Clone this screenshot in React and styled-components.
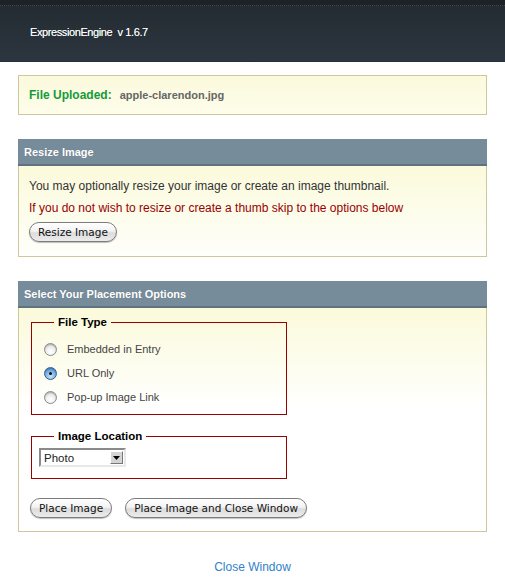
import React, { useState } from 'react'
import styled, { createGlobalStyle } from 'styled-components'

const GlobalStyle = createGlobalStyle`
  html, body {
    margin: 0;
    padding: 0;
    background: #fff;
  }
  body {
    font-family: "Liberation Sans", Arial, sans-serif;
    font-size: 12px;
    color: #333;
  }
`

const Header = styled.div`
  height: 62px;
  box-sizing: border-box;
  background: linear-gradient(#1d2227 0, #1d2227 5px, #242b32 6px, #2c363f 100%);
  border-bottom: 1px solid #2a2e45;
  position: relative;
  display: flex;
  align-items: center;
  padding: 0 30px;

  &::before {
    content: '';
    position: absolute;
    left: 0;
    right: 0;
    top: 5px;
    border-top: 1px dotted #3d454d;
  }
`

const Title = styled.div`
  color: #fff;
  font-size: 11px;
  letter-spacing: -0.4px;
  padding-top: 2px;
  white-space: pre;
  text-shadow: 0 0 0.5px rgba(255, 255, 255, 0.6);
`

const Content = styled.div`
  padding: 13px 18px 0;
  display: flex;
  flex-direction: column;
  gap: 24px;
`

const Notice = styled.div`
  height: 40px;
  box-sizing: border-box;
  border: 1px solid #cdc89c;
  background: linear-gradient(#fbfadd, #fdfdea);
  display: flex;
  align-items: center;
  padding: 0 10px;
  font-weight: bold;
  font-size: 12px;
`

const Green = styled.span`
  color: #139a3c;
  margin-right: 8px;
`

const FileName = styled.span`
  color: #666;
  font-size: 11px;
`

const Section = styled.div`
  display: flex;
  flex-direction: column;
`

const SectionHead = styled.div`
  height: 25px;
  background: #778c9a;
  border-bottom: 2px solid #5f7280;
  color: #fff;
  font-weight: bold;
  font-size: 11px;
  display: flex;
  align-items: center;
  padding: 0 6px;
  text-shadow: 0 0 1px rgba(0, 0, 0, 0.2);
`

const SectionBody = styled.div`
  border: 1px solid #cdc89c;
  border-top: none;
  background: linear-gradient(#fbfadb 0, #fdfdf0 60px, #fff 100px);
  padding: ${(p) => p.pad};
  display: flex;
  flex-direction: column;
  align-items: flex-start;
`

const Line = styled.p`
  margin: 0;
  line-height: 22px;
  color: ${(p) => (p.red ? '#990000' : '#333')};
`

const Button = styled.button`
  font-family: "DejaVu Sans", "Lucida Grande", sans-serif;
  font-size: 10.5px;
  color: #111;
  height: 20px;
  padding: 0 8px;
  border-radius: 10px;
  border: 1px solid #7c7c7c;
  background: linear-gradient(#ffffff 0%, #f3f3f3 45%, #dcdcdc 55%, #ececec 100%);
  box-shadow: 0 1px 1px rgba(0, 0, 0, 0.25);
  cursor: pointer;
  line-height: 18px;
`

const Fieldset = styled.fieldset`
  width: 256px;
  box-sizing: border-box;
  margin: 0;
  border: 1px solid #990000;
  padding: ${(p) => p.pad};
`

const Legend = styled.legend`
  font-weight: bold;
  font-size: 11.5px;
  color: #000;
  padding: 0 4px;
  margin-left: ${(p) => p.offset}px;
`

const RadioRow = styled.label`
  display: flex;
  align-items: center;
  height: 24px;
  color: #444;
  font-size: 11px;
  cursor: pointer;
`

const Radio = styled.input`
  appearance: none;
  width: 13px;
  height: 13px;
  margin: 0 10px 0 2px;
  border-radius: 50%;
  border: 1px solid #8a8a8a;
  background: radial-gradient(circle at 50% 70%, #ffffff 0, #f2f2f2 40%, #c9c9c9 100%);
  box-shadow: inset 0 1px 1px rgba(0, 0, 0, 0.2);
  position: relative;

  &:checked {
    border-color: #3a5f8c;
    background: radial-gradient(circle at 50% 75%, #c5e6fb 0, #7fb8e8 45%, #3a78c0 100%);
  }
  &:checked::after {
    content: '';
    position: absolute;
    left: 4px;
    top: 4px;
    width: 3px;
    height: 3px;
    border-radius: 50%;
    background: #111;
  }
`

const SelectBox = styled.div`
  width: 87px;
  height: 19px;
  box-sizing: border-box;
  border: 2px solid;
  border-color: #8a8a8a #e8e8e8 #e8e8e8 #8a8a8a;
  background: #fff;
  display: flex;
  align-items: center;
  font-size: 11.5px;
  color: #222;
  padding-left: 3px;
`

const SelectText = styled.span`
  flex: 1;
`

const Arrow = styled.span`
  width: 13px;
  height: 13px;
  margin-right: 1px;
  box-sizing: border-box;
  border: 1px solid;
  border-color: #fff #777 #777 #fff;
  background: #d4d4d4;
  display: flex;
  align-items: center;
  justify-content: center;
`

const Buttons = styled.div`
  display: flex;
  gap: 13px;
  margin: 19px 0 0 -1px;
`

const Footer = styled.div`
  text-align: center;
  padding: 28px 0 0;
`

const Link = styled.a`
  color: #3182c9;
  text-decoration: none;
  font-size: 12px;
`

const options = ['Embedded in Entry', 'URL Only', 'Pop-up Image Link']

export default function App() {
  const [choice, setChoice] = useState(1)

  return (
    <>
      <GlobalStyle />
      <Header>
        <Title>ExpressionEngine  v 1.6.7</Title>
      </Header>
      <Content>
        <Notice>
          <Green>File Uploaded:</Green>
          <FileName>apple-clarendon.jpg</FileName>
        </Notice>

        <Section>
          <SectionHead>Resize Image</SectionHead>
          <SectionBody pad="9px 10px 14px">
            <Line>You may optionally resize your image or create an image thumbnail.</Line>
            <Line red>If you do not wish to resize or create a thumb skip to the options below</Line>
            <Button style={{ marginTop: 3 }}>Resize Image</Button>
          </SectionBody>
        </Section>

        <Section>
          <SectionHead>Select Your Placement Options</SectionHead>
          <SectionBody pad="8px 12px 13px">
            <Fieldset pad="9px 10px 5px">
              <Legend offset={12}>File Type</Legend>
              {options.map((o, i) => (
                <RadioRow key={o}>
                  <Radio
                    type="radio"
                    name="type"
                    checked={choice === i}
                    onChange={() => setChoice(i)}
                  />
                  {o}
                </RadioRow>
              ))}
            </Fieldset>
            <Fieldset pad="6px 7px 11px" style={{ marginTop: 15 }}>
              <Legend offset={15}>Image Location</Legend>
              <SelectBox>
                <SelectText>Photo</SelectText>
                <Arrow>
                  <svg width="7" height="4" viewBox="0 0 7 4">
                    <path d="M0 0h7L3.5 4z" fill="#000" />
                  </svg>
                </Arrow>
              </SelectBox>
            </Fieldset>
            <Buttons>
              <Button>Place Image</Button>
              <Button>Place Image and Close Window</Button>
            </Buttons>
          </SectionBody>
        </Section>
      </Content>
      <Footer>
        <Link href="#">Close Window</Link>
      </Footer>
    </>
  )
}
